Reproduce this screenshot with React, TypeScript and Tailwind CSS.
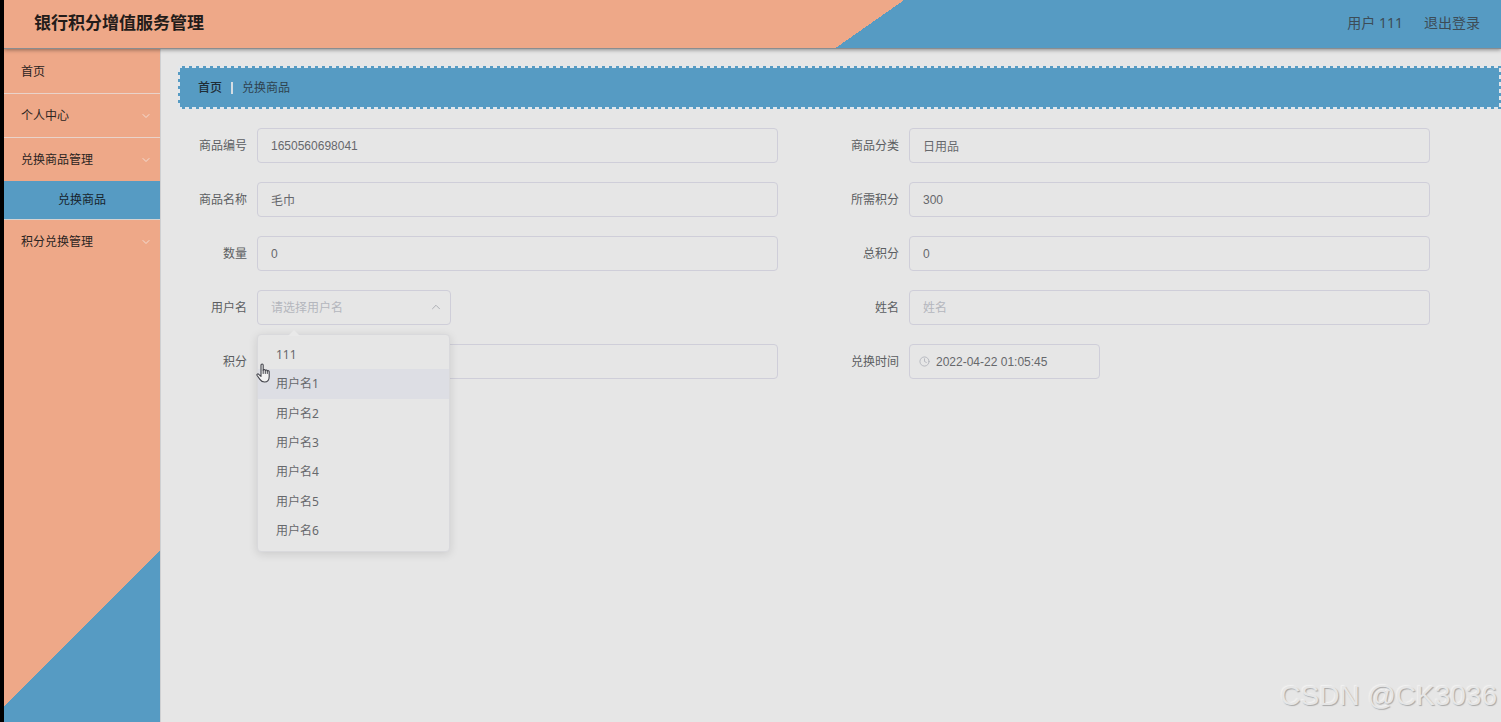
import { useState } from 'react'
import { FiChevronDown, FiChevronUp, FiClock } from 'react-icons/fi'

const users = ['111', '用户名1', '用户名2', '用户名3', '用户名4', '用户名5', '用户名6']

const fieldClass =
  'h-[35px] w-full rounded border border-[#cfced9] bg-transparent px-[13px] text-xs text-[#66686c] outline-none placeholder:text-[#b4b6bd]'

function Field({ id, label, value, placeholder }: { id: string; label: string; value?: string; placeholder?: string }) {
  return (
    <div className="flex items-center pr-[52px]">
      <FieldLabel id={id} label={label} />
      <input
        id={id}
        defaultValue={value}
        placeholder={placeholder}
        className={`${fieldClass} font-['Liberation_Sans','Noto_Sans_CJK_SC',sans-serif]`}
      />
    </div>
  )
}

function FieldLabel({ id, label }: { id: string; label: string }) {
  return (
    <label htmlFor={id} className="w-[79px] shrink-0 pr-[10px] text-right text-xs text-[#5c5e62]">
      {label}
    </label>
  )
}

function MenuItem({ label, arrow, line }: { label: string; arrow?: boolean; line?: boolean }) {
  return (
    <li className={line ? 'border-b border-[#e9d3ca]' : ''}>
      <a href="#" className="flex h-[43px] items-center justify-between pl-[17px] pr-2 text-xs text-[#2b2422]">
        {label}
        {arrow && <FiChevronDown className="h-3 w-3 text-[#f3ddd3]" />}
      </a>
    </li>
  )
}

function UserSelect() {
  const [open, setOpen] = useState(true)
  const [user, setUser] = useState('')
  const [active, setActive] = useState('用户名1')

  const choose = (name: string) => {
    setUser(name)
    setOpen(false)
  }

  return (
    <div className="relative w-[194px]">
      <select
        id="username"
        value={user}
        onChange={(e) => setUser(e.target.value)}
        onMouseDown={(e) => {
          e.preventDefault()
          setOpen(!open)
        }}
        className={`${fieldClass} appearance-none ${user ? '' : 'text-[#b4b6bd]'}`}
      >
        <option value="">请选择用户名</option>
        {users.map((name) => (
          <option key={name}>{name}</option>
        ))}
      </select>
      <FiChevronUp className="pointer-events-none absolute right-2 top-[10px] h-[14px] w-[14px] stroke-[1.5] text-[#a5a7ae]" />

      {open && (
        <div className="absolute left-0 top-[44px] z-10 w-[193px] rounded border border-[#d9d9dc] bg-[#e6e6e6] py-[5px] shadow-[0_2px_10px_rgba(0,0,0,0.12)]">
          <svg viewBox="0 0 12 6" className="absolute -top-[5px] left-[30px] h-[6px] w-3">
            <path d="M0 6 6 0l6 6z" fill="#e9e9e9" />
          </svg>
          <ul className="grid h-[206px] auto-rows-fr">
            {users.map((name) => (
              <li key={name}>
                <button
                  type="button"
                  onClick={() => choose(name)}
                  onMouseEnter={() => setActive(name)}
                  className={`h-full w-full px-[18px] text-left text-xs text-[#66686c] ${active === name ? 'bg-[#dddee4]' : ''}`}
                >
                  {name}
                </button>
              </li>
            ))}
          </ul>
          {/* hand pointer */}
          <svg viewBox="0 0 16 21" className="pointer-events-none absolute -left-[2px] top-[28px] h-[21px] w-4">
            <path
              d="M5 2.2c0-1.6 2.2-1.6 2.2 0v5c.5-1 2-.8 2.1.3.5-.9 1.9-.6 2 .5.6-.7 1.9-.3 1.9.8v4.6c0 3.3-1.6 5.6-4.7 5.6-2.2 0-3.5-.9-4.6-2.6L1.1 12.500c-.7-1.200.7-2.200 1.700-1.200L5 13.400z"
              fill="#f2f2f2"
              stroke="#44454c"
              strokeWidth="1.1"
              strokeLinejoin="round"
            />
            <path d="M7.200 7.200v3.300M9.300 7.500v3M11.300 8v2.500" stroke="#44454c" strokeLinecap="round" />
          </svg>
        </div>
      )}
    </div>
  )
}

export default function App() {
  return (
    <div className="flex min-h-screen flex-col border-l-4 border-black bg-[#e6e6e6] font-['Noto_Sans','Noto_Sans_CJK_SC',sans-serif]">
      <header className="relative flex h-[49px] items-center justify-between border-b border-[#8a8d90] bg-[linear-gradient(145deg,#eea888_57.5%,#569bc3_57.5%)] pb-0.5 pl-[30px] pr-[21px] shadow-[0_1px_4px_rgba(0,0,0,0.4)]">
        <h1 className="text-[17px] font-bold leading-6 text-[#231c1a]">银行积分增值服务管理</h1>
        <div className="flex gap-[21px] text-sm text-[#3d4c57]">
          <span>用户 111</span>
          <a href="#">退出登录</a>
        </div>
      </header>

      <div className="flex flex-1">
        <nav className="w-[157px] shrink-0 border-r border-[#cfd0d2] bg-[linear-gradient(135deg,#eea888_79.3%,#569bc3_79.3%)] pt-px">
          <ul>
            <MenuItem label="首页" line />
            <MenuItem label="个人中心" arrow line />
            <MenuItem label="兑换商品管理" arrow />
            <li className="border-b border-[#d6d3d1]">
              <a href="#" className="flex h-[38px] items-center bg-[#569bc3] pl-[54px] text-xs text-[#16242d]">
                兑换商品
              </a>
            </li>
            <MenuItem label="积分兑换管理" arrow />
          </ul>
        </nav>

        <main className="flex min-w-0 flex-1 flex-col pl-[17px] pt-[17px]">
          {/* light dashes around the breadcrumb bar */}
          <div className="bg-[repeating-linear-gradient(90deg,#e2e7ec_0_4px,#569bc3_4px_7px)] py-0.5">
            <div className="bg-[repeating-linear-gradient(180deg,#e2e7ec_0_4px,#569bc3_4px_7px)] px-0.5">
              <div className="flex h-[39px] items-center bg-[#569bc3] pl-[18px] text-xs">
                <a href="#" className="font-medium text-[#1f2d36]">首页</a>
                <span className="mx-[9px] h-3 w-0.5 bg-[#d5dde3]" />
                <span className="text-[#2f4350]">兑换商品</span>
              </div>
            </div>
          </div>

          <form className="mt-[19px] grid grid-cols-2 gap-y-[19px] pr-[19px]">
            <Field id="code" label="商品编号" value="1650560698041" />
            <Field id="category" label="商品分类" value="日用品" />
            <Field id="name" label="商品名称" value="毛巾" />
            <Field id="points" label="所需积分" value="300" />
            <Field id="count" label="数量" value="0" />
            <Field id="total" label="总积分" value="0" />
            <div className="flex items-center">
              <FieldLabel id="username" label="用户名" />
              <UserSelect />
            </div>
            <Field id="realname" label="姓名" placeholder="姓名" />
            <Field id="score" label="积分" />
            <div className="flex items-center">
              <FieldLabel id="time" label="兑换时间" />
              <div className="flex h-[35px] w-[191px] items-center gap-[6px] rounded border border-[#cfced9] pl-[9px]">
                <FiClock className="h-[11px] w-[11px] shrink-0 text-[#b4b6bd]" />
                <input
                  id="time"
                  defaultValue="2022-04-22 01:05:45"
                  className="w-full min-w-0 bg-transparent font-['Liberation_Sans',sans-serif] text-xs text-[#66686c] outline-none"
                />
              </div>
            </div>
          </form>

          <p className="mt-auto pb-[10px] pr-1 text-right font-['Liberation_Sans',sans-serif] text-[28px] leading-8 text-[#e6e6e6] [text-shadow:1px_1px_1px_#a8a8a8,-1px_-1px_1px_#f2f2f2]">
            CSDN @CK3036
          </p>
        </main>
      </div>
    </div>
  )
}
